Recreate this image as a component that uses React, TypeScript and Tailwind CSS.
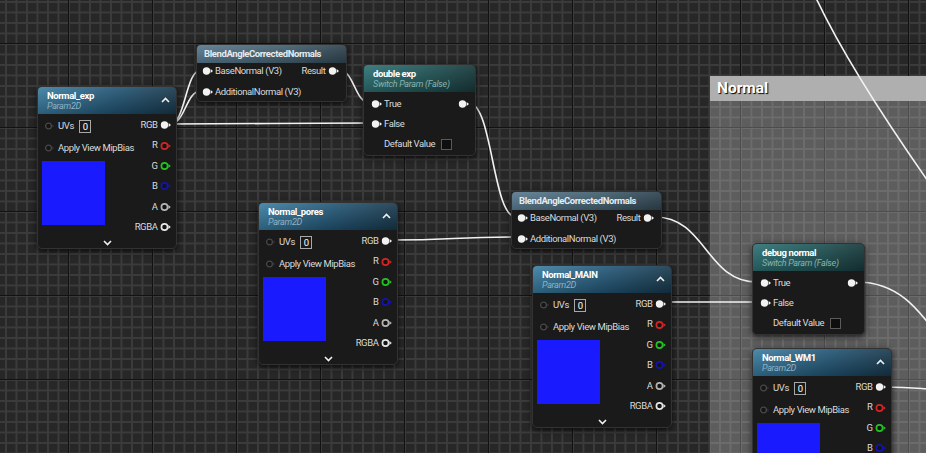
import React from 'react';

type PinKind = 'filled' | 'dim' | 'hollow';

const Pin = ({ kind, color = '#ffffff' }: { kind: PinKind; color?: string }) => {
  if (kind === 'filled') {
    return (
      <svg width="12" height="10" viewBox="0 0 12 10" className="shrink-0">
        <circle cx="4.5" cy="5" r="3.7" fill="#f2f2f2" />
        <polygon points="8.6,3 11,5 8.6,7" fill="#f2f2f2" />
      </svg>
    );
  }
  if (kind === 'dim') {
    return (
      <svg width="12" height="10" viewBox="0 0 12 10" className="shrink-0">
        <circle cx="4.5" cy="5" r="2.9" fill="#151515" stroke="#474747" strokeWidth="1.3" />
        <polygon points="8.4,3.6 10,5 8.4,6.4" fill="#3a3a3a" />
      </svg>
    );
  }
  return (
    <svg width="12" height="10" viewBox="0 0 12 10" className="shrink-0">
      <circle cx="4.5" cy="5" r="3.1" fill="#141414" stroke={color} strokeWidth="1.7" />
      <polygon points="8.4,3 10.8,5 8.4,7" fill={color} />
    </svg>
  );
};

const ChevronUp = () => (
  <svg width="9" height="6" viewBox="0 0 9 6">
    <polyline points="1,5 4.5,1.5 8,5" fill="none" stroke="#f0f0f0" strokeWidth="1.6" />
  </svg>
);

const ChevronDown = () => (
  <svg width="9" height="6" viewBox="0 0 9 6">
    <polyline points="1,1 4.5,4.5 8,1" fill="none" stroke="#f0f0f0" strokeWidth="1.6" />
  </svg>
);

const outputs = [
  { label: 'RGB', kind: 'filled' as PinKind, color: '#fff' },
  { label: 'R', kind: 'hollow' as PinKind, color: '#d42424' },
  { label: 'G', kind: 'hollow' as PinKind, color: '#22c422' },
  { label: 'B', kind: 'hollow' as PinKind, color: '#1414a8' },
  { label: 'A', kind: 'hollow' as PinKind, color: '#b4b4b4' },
  { label: 'RGBA', kind: 'hollow' as PinKind, color: '#e6e6e6' },
];

const nodeBase =
  'absolute rounded-[5px] bg-[#1a1a1a] border border-[#323232] shadow-[0_2px_6px_rgba(0,0,0,0.7)] overflow-hidden font-["Roboto","Liberation_Sans",sans-serif]';

const label = 'text-[9.5px] tracking-[-0.4px] text-[#dadada] whitespace-nowrap';
const titleCls = 'text-[9.5px] leading-[11px] tracking-[-0.4px] font-bold whitespace-nowrap';

// Param2D texture parameter node
const ParamNode = ({ title, className }: { title: string; className: string }) => (
  <div className={`${nodeBase} w-[140px] h-[163px] flex flex-col ${className}`}>
    <div className="h-[27px] shrink-0 flex items-start justify-between pl-[9px] pr-[6px] pt-[3px] bg-[linear-gradient(to_bottom,rgba(255,255,255,0.10),rgba(0,0,0,0.25)),linear-gradient(to_right,#3a7ea2,#215575_55%,#17384c)]">
      <div className="flex flex-col">
        <span className={`${titleCls} text-white`}>{title}</span>
        <span className="text-[9px] leading-[11px] tracking-[-0.3px] italic text-[#8fb1c4]">Param2D</span>
      </div>
      <div className="pt-[7px]">
        <ChevronUp />
      </div>
    </div>
    <div className="flex flex-1 justify-between">
      <div className="flex flex-col pl-[4px] pt-[1px]">
        <div className="h-[22px] flex items-center gap-[2.5px] pl-[1.5px]">
          <Pin kind="dim" />
          <span className={label}>UVs</span>
          <span className="ml-[3px] w-[12px] h-[13px] border border-[#a8a8a8] text-[9.5px] leading-[11px] text-white text-center">0</span>
        </div>
        <div className="h-[22px] flex items-center gap-[2.5px] pl-[1.5px]">
          <Pin kind="dim" />
          <span className={label}>Apply View MipBias</span>
        </div>
        <div className="mt-[2px] w-[63px] h-[64px] bg-[#1a1aff]" />
      </div>
      <div className="flex flex-col items-end pr-[4px] pt-[1px]">
        {outputs.map((o) => (
          <div key={o.label} className="h-[20.4px] flex items-center gap-[2.5px]">
            <span className={label}>{o.label}</span>
            <Pin kind={o.kind} color={o.color} />
          </div>
        ))}
      </div>
    </div>
    <div className="h-[13px] shrink-0 flex justify-center items-center pb-[1px]">
      <ChevronDown />
    </div>
  </div>
);

const BlendNode = ({ className }: { className: string }) => (
  <div className={`${nodeBase} w-[151px] h-[58px] flex flex-col ${className}`}>
    <div className="h-[18px] shrink-0 pl-[7px] pt-[3px] bg-[linear-gradient(to_bottom,rgba(255,255,255,0.08),rgba(0,0,0,0.2)),linear-gradient(to_right,#5b7b90,#44606f_60%,#2f4450)]">
      <span className={`${titleCls} block text-[#e4ecf0]`}>BlendAngleCorrectedNormals</span>
    </div>
    <div className="flex flex-col gap-[11px] pt-[3px]">
      <div className="h-[10px] flex items-center justify-between pl-[4.5px] pr-[6px]">
        <div className="flex items-center gap-[1.5px]">
          <Pin kind="filled" />
          <span className={label}>BaseNormal (V3)</span>
        </div>
        <div className="flex items-center gap-[2.5px]">
          <span className={label}>Result</span>
          <Pin kind="filled" />
        </div>
      </div>
      <div className="h-[10px] flex items-center pl-[4.5px] gap-[1.5px]">
        <Pin kind="filled" />
        <span className={label}>AdditionalNormal (V3)</span>
      </div>
    </div>
  </div>
);

const SwitchNode = ({ title, className }: { title: string; className: string }) => (
  <div className={`${nodeBase} w-[113px] h-[92px] flex flex-col ${className}`}>
    <div className="h-[27px] shrink-0 flex flex-col pl-[9px] pt-[3px] bg-[linear-gradient(to_bottom,rgba(255,255,255,0.08),rgba(0,0,0,0.25)),linear-gradient(to_right,#2f7477,#225759_55%,#183a3c)]">
      <span className={`${titleCls} text-white`}>{title}</span>
      <span className="text-[9px] leading-[11px] tracking-[-0.3px] italic text-[#88b4ad] whitespace-nowrap">Switch Param (False)</span>
    </div>
    <div className="flex flex-col pt-[2px]">
      <div className="h-[20px] flex items-center justify-between pl-[6.5px] pr-[5.5px]">
        <div className="flex items-center gap-[1.5px]">
          <Pin kind="filled" />
          <span className={label}>True</span>
        </div>
        <Pin kind="filled" />
      </div>
      <div className="h-[20px] flex items-center pl-[6.5px] gap-[1.5px]">
        <Pin kind="filled" />
        <span className={label}>False</span>
      </div>
      <div className="h-[20px] flex items-center pl-[20px] gap-[6px]">
        <span className={label}>Default Value</span>
        <span className="w-[11px] h-[11px] border border-[#5a5a5a] bg-[#0e0e0e]" />
      </div>
    </div>
  </div>
);

const wire = (x1: number, y1: number, x2: number, y2: number) => {
  const dx = Math.max(Math.abs(x2 - x1) * 0.5, 8);
  return `M${x1} ${y1} C${x1 + dx} ${y1} ${x2 - dx} ${y2} ${x2} ${y2}`;
};

const wires = [
  wire(170, 124, 201, 70),
  wire(170, 124, 201, 91),
  wire(170, 124, 370, 123),
  wire(339, 70, 370, 103),
  wire(469, 103, 516, 217),
  wire(391, 240, 516, 237),
  wire(655, 217, 757, 282),
  wire(663, 302, 757, 302),
  wire(857, 282, 1020, 390),
  wire(884, 387, 960, 390),
  'M816 -2 Q850 70 930 184',
];

export default function App() {
  return (
    <div className="relative w-[926px] h-[453px] overflow-hidden bg-[#272727] bg-[linear-gradient(to_right,#121212_1.2px,transparent_1.2px),linear-gradient(to_bottom,#121212_1.2px,transparent_1.2px),linear-gradient(to_right,#3b3b3b_1.5px,transparent_1.5px),linear-gradient(to_bottom,#3b3b3b_1.5px,transparent_1.5px)] bg-[size:84px_84px,84px_84px,10.5px_10.5px,10.5px_10.5px] bg-[position:68px_43px,68px_43px,5px_1px,5px_1px]">
      {/* comment box */}
      <div className="absolute left-[710px] top-[76px] right-[-20px] bottom-[-20px] bg-white/25 flex flex-col">
        <div className="h-[25px] bg-[#afafaf] pl-[7px] flex items-center">
          <span className="text-[15.5px] font-bold text-white [text-shadow:1px_1px_1px_#000] font-['Roboto','Liberation_Sans',sans-serif]">Normal</span>
        </div>
      </div>

      <svg className="absolute inset-0" width="926" height="453">
        {wires.map((d, i) => (
          <path key={i} d={d} fill="none" stroke="#f2f2f2" strokeWidth="1.6" />
        ))}
      </svg>

      <ParamNode title="Normal_exp" className="left-[37px] top-[86px]" />
      <BlendNode className="left-[196px] top-[44px]" />
      <SwitchNode title="double exp" className="left-[363px] top-[64px]" />
      <ParamNode title="Normal_pores" className="left-[258px] top-[202px]" />
      <BlendNode className="left-[511px] top-[191px]" />
      <ParamNode title="Normal_MAIN" className="left-[532px] top-[265px]" />
      <SwitchNode title="debug normal" className="left-[752px] top-[243px]" />
      <ParamNode title="Normal_WM1" className="left-[752px] top-[348px]" />
    </div>
  );
}
